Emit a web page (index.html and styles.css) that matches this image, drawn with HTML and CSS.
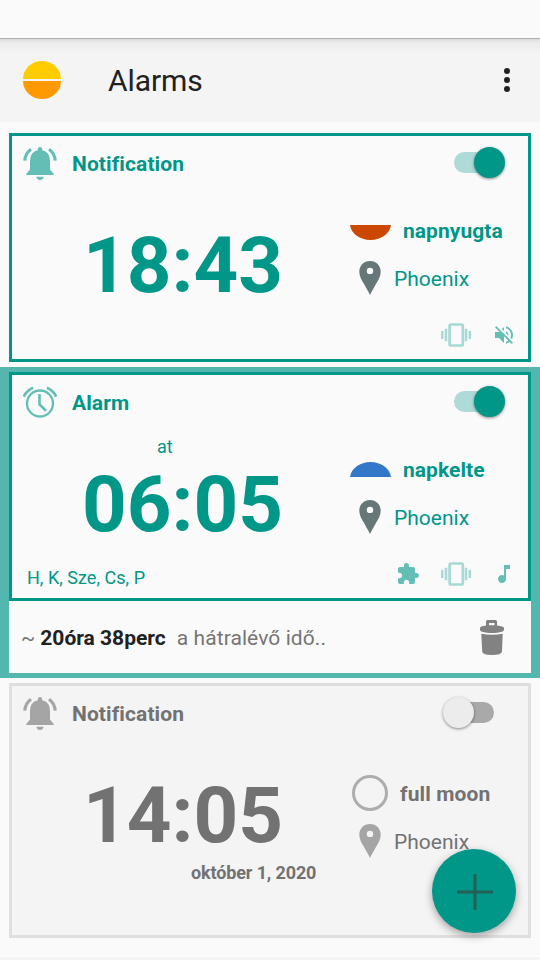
FILE: index.html
```html
<!DOCTYPE html>
<html lang="hu">
<head>
<meta charset="utf-8">
<title>Alarms</title>
<link rel="stylesheet" href="styles.css">
</head>
<body>
<svg class="defs" width="0" height="0" aria-hidden="true">
  <symbol id="bell" viewBox="0 0 34 34">
    <path fill="currentColor" d="M14.8 2.3Q14.8 0 17 0t2.200 2.300V3.200Q27 5 27 14v8.500l3.600 4.200v1.300H3.400v-1.300L7 22.500V14Q7 5 14.800 3.200zM13.300 29.700h7.400q-1 3.300-3.700 3.300t-3.700-3.300z"/>
    <path fill="none" stroke="currentColor" stroke-width="3.200" d="M8 2.200Q2.200 6.200 1.800 13.700M26 2.200Q31.800 6.200 32.200 13.700"/>
  </symbol>
  <symbol id="clock" viewBox="0 0 34 34">
    <g fill="none" stroke="currentColor"><circle cx="17" cy="17.500" r="13" stroke-width="2.300"/><path stroke-width="2.600" d="M16.500 8V18.500l6.500 6.300"/><path stroke-width="2.700" d="M.8 10.700Q3.500 4.800 10 1.800M33.200 10.700Q30.500 4.800 24 1.800"/></g>
  </symbol>
  <symbol id="pin" viewBox="0 0 22 34">
    <path fill="currentColor" fill-rule="evenodd" d="M11 0C4.700 0 .3 4.700.3 10.700c0 4.500 2.400 8.300 4.900 12.600C7.200 26.900 9 30 11 34c2-4 3.800-7.100 5.800-10.700 2.500-4.300 4.900-8.100 4.900-12.600C21.700 4.700 17.300 0 11 0zM11 6.700a3.200 3.200 0 1 1 0 6.400 3.200 3.200 0 0 1 0-6.400z"/>
  </symbol>
  <symbol id="vibrate" viewBox="0 0 30 24">
    <g fill="none" stroke="currentColor"><rect x="8.600" y="1.500" width="13.200" height="21" rx="1.500" stroke-width="2.700"/><path stroke-width="2.500" d="M1.200 8v8M28.800 8v8M5 5.800v12.400M25 5.800v12.400"/></g>
  </symbol>
  <symbol id="muted" viewBox="0 0 24 24">
    <path fill="currentColor" d="M16.500 12c0-1.770-1.020-3.290-2.500-4.030v2.210l2.450 2.450c.03-.2.050-.41.050-.63zm2.500 0c0 .94-.2 1.820-.54 2.640l1.510 1.510C20.630 14.910 21 13.500 21 12c0-4.280-2.990-7.860-7-8.770v2.060c2.890.86 5 3.540 5 6.710zM4.270 3L3 4.270 7.730 9H3v6h4l5 5v-6.730l4.250 4.250c-.67.520-1.420.93-2.250 1.180v2.060c1.380-.31 2.630-.95 3.690-1.810L19.730 21 21 19.730l-9-9L4.270 3zM12 4L9.910 6.090 12 8.180V4z"/>
  </symbol>
  <symbol id="puzzle" viewBox="0 0 24 24">
    <path fill="currentColor" d="M20.500 11H19V7c0-1.100-.9-2-2-2h-4V3.500C13 2.120 11.880 1 10.500 1S8 2.120 8 3.500V5H4c-1.100 0-1.990.9-1.990 2v3.800H3.500c1.490 0 2.700 1.210 2.700 2.700s-1.210 2.700-2.700 2.700H2V20c0 1.100.9 2 2 2h3.800v-1.500c0-1.490 1.210-2.700 2.700-2.700s2.700 1.210 2.700 2.700V22H17c1.100 0 2-.9 2-2v-4h1.500c1.380 0 2.500-1.120 2.500-2.500S21.880 11 20.500 11z"/>
  </symbol>
  <symbol id="note" viewBox="0 0 24 24">
    <path fill="currentColor" d="M12 3v10.550c-.59-.34-1.270-.55-2-.55-2.210 0-4 1.790-4 4s1.790 4 4 4 4-1.790 4-4V7h4V3h-6z"/>
  </symbol>
</svg>

<div class="status"></div>
<header class="bar">
  <svg class="logo" viewBox="0 0 38 38"><path fill="#fc0" d="M0 18a19 18 0 0 1 38 0z"/><path fill="#f90" d="M0 20a19 18 0 0 0 38 0z"/></svg>
  <h1>Alarms</h1>
  <svg class="more" viewBox="0 0 6 24"><circle cx="3" cy="3" r="3"/><circle cx="3" cy="12" r="3"/><circle cx="3" cy="21" r="3"/></svg>
</header>

<main>
  <div class="item">
    <section class="card">
      <div class="head">
        <svg class="kind"><use href="#bell"/></svg>
        <h2>Notification</h2>
        <span class="switch on"><i></i></span>
      </div>
      <div class="body">
        <div class="when"><div class="prefix"></div><div class="time from-one">18:43</div></div>
        <div class="info">
          <div class="event"><svg class="sun set" viewBox="0 0 41 15"><path fill="#cc4700" d="M0 0h41C40 8.500 31 15 20.500 15S1 8.500 0 0z"/></svg><b>napnyugta</b></div>
          <div class="place"><svg class="pin"><use href="#pin"/></svg><span>Phoenix</span></div>
          <div class="flags"><svg class="vib"><use href="#vibrate"/></svg><svg class="flag"><use href="#muted"/></svg></div>
        </div>
      </div>
    </section>
  </div>

  <div class="item selected">
    <section class="card">
      <div class="head">
        <svg class="kind"><use href="#clock"/></svg>
        <h2>Alarm</h2>
        <span class="switch on"><i></i></span>
      </div>
      <div class="body">
        <div class="when"><div class="prefix">at</div><div class="time">06:05</div><div class="days">H, K, Sze, Cs, P</div></div>
        <div class="info">
          <div class="event"><svg class="sun" viewBox="0 0 41 15"><path fill="#3377c9" d="M0 15h41C40 6.500 31 0 20.500 0S1 6.500 0 15z"/></svg><b>napkelte</b></div>
          <div class="place"><svg class="pin"><use href="#pin"/></svg><span>Phoenix</span></div>
          <div class="flags"><svg class="flag puzzle"><use href="#puzzle"/></svg><svg class="vib"><use href="#vibrate"/></svg><svg class="flag"><use href="#note"/></svg></div>
        </div>
      </div>
    </section>
    <div class="remaining">
      <span class="tilde">~</span><b>20óra 38perc</b><span class="rest">a hátralévő idő..</span>
      <svg class="trash" viewBox="0 0 24 35"><path fill="#828282" fill-rule="evenodd" d="M6 5.500V1.500Q6 0 7.500 0h8Q17 0 17 1.500v4c4 .4 7 1.400 7 2.500v2c0 1.600-5 3-12 3S0 11.600 0 10V8c0-1.100 2-2.100 6-2.500zM9 3v2.200h5.500V3zM1.300 13.700Q12 16 22.700 13.700L22 31.500Q21.500 35 12 35T2.200 31.500z"/></svg>
    </div>
  </div>

  <div class="item">
    <section class="card off">
      <div class="head">
        <svg class="kind"><use href="#bell"/></svg>
        <h2>Notification</h2>
        <span class="switch"><i></i></span>
      </div>
      <div class="body">
        <div class="when"><div class="prefix"></div><div class="time from-one">14:05</div><div class="date">október 1, 2020</div></div>
        <div class="info">
          <div class="event"><span class="moon"></span><b>full moon</b></div>
          <div class="place"><svg class="pin"><use href="#pin"/></svg><span>Phoenix</span></div>
        </div>
      </div>
    </section>
  </div>
</main>
<div class="bottom"></div>
<button class="fab" aria-label="Add"><svg viewBox="0 0 36 36"><path d="M18 0v36M0 18h36" stroke="#236055" stroke-width="3"/></svg></button>
</body>
</html>
```
FILE: styles.css
```css
* { box-sizing: border-box; }
body {
  margin: 0;
  width: 540px;
  height: 960px;
  overflow: hidden;
  position: relative;
  display: flex;
  flex-direction: column;
  background: #fafafa;
  font-family: Roboto, sans-serif;
  color: #009688;
}
svg { display: block; flex: none; }
.defs { position: absolute; }
h1, h2 { margin: 0; }
.status { height: 39px; border-bottom: 1px solid #b0b0b0; flex: none; }
.bar {
  height: 83px;
  flex: none;
  display: flex;
  align-items: center;
  padding: 0 30px 1px 23px;
  background: linear-gradient(#dedede 0, #e9e9e9 4px, #f0f0f0 9px, #f4f4f4 14px);
}
.logo { width: 38px; height: 38px; }
.bar h1 { margin-left: 47px; font-size: 30px; font-weight: 400; color: #212121; letter-spacing: -0.1px; }
.more { width: 6px; height: 24px; margin-left: auto; fill: #212121; }

main { padding-top: 6px; display: flex; flex-direction: column; }
.item { padding: 5px 9px; }
.selected { background: #54b7af; }
.card { height: 229px; border: 3px solid #009688; background: #fafafa; display: flex; flex-direction: column; }
.head { height: 54px; display: flex; align-items: center; padding: 0 23px 0 11px; }
.kind { width: 34px; height: 34px; color: #64beb5; margin-top: 1px; }
.head h2 { margin-left: 15px; padding-top: 2px; font-size: 21px; font-weight: 700; line-height: 24px; letter-spacing: 0.1px; }
.switch { margin: -2px 0 0 auto; width: 51px; height: 31px; display: flex; align-items: center; }
.switch::before { content: ""; width: 40px; height: 21px; border-radius: 11px; background: #aedbd7; }
.switch i { width: 31px; height: 31px; border-radius: 50%; margin-left: -20px; background: #009688; box-shadow: 0 1px 3px rgba(0,0,0,.45); position: relative; }
.body { flex: 1; display: flex; }
.when { width: 319px; display: flex; flex-direction: column; }
.prefix { height: 36px; line-height: 36px; font-size: 18px; padding-left: 145px; }
.time { height: 76px; line-height: 80px; font-size: 78px; font-weight: 700; padding-left: 70px; }
.from-one::first-letter { letter-spacing: -1px; }
.from-one { padding-left: 71px; }
.days { font-size: 18px; line-height: 24px; padding: 25px 0 0 15px; letter-spacing: 0.03px; }
.date { font-size: 18px; font-weight: 700; line-height: 24px; padding: 9px 0 0 179px; letter-spacing: -0.13px; }
.info { flex: 1; padding-top: 16px; }
.event, .place { height: 48px; display: flex; align-items: center; font-size: 21px; }
.event { padding-left: 18.500px; }
.sun { width: 41px; height: 15px; margin-top: 1px; }
.sun.set { margin-top: 5px; }
.event b { margin-left: 12.500px; padding-top: 2px; letter-spacing: 0.05px; }
.place { padding-left: 28px; }
.pin { width: 22px; height: 34px; color: #667777; }
.place span { margin-left: 13px; padding-top: 2px; font-weight: 400; }
.flags { margin-top: 21px; height: 24px; display: flex; justify-content: flex-end; align-items: center; padding-right: 12px; color: #64beb5; }
.flag { width: 24px; height: 24px; }
.puzzle { margin-right: 21px; }
.vib { width: 30px; height: 24px; margin-right: 21px; color: #a8dad5; }
.remaining { height: 72px; background: #fafafa; display: flex; align-items: center; padding: 0 27px 0 12px; font-size: 21px; color: #757575; }
.remaining span, .remaining b { padding-top: 2px; }
.remaining b { margin-left: 5px; color: #212121; }
.rest { margin-left: 11px; letter-spacing: 0.08px; }
.trash { width: 24px; height: 35px; margin-left: auto; }

.off { height: 255px; border-color: #dfdfdf; background: #f4f4f4; color: #727272; }
.off .kind, .off .pin { color: #a5a5a5; }
.off .info { padding-top: 29px; }
.off .switch { margin-right: 11px; flex-direction: row-reverse; }
.off .switch::before { background: #a9a9a9; }
.off .switch i { margin: 0 -20px 0 0; background: #ececec; }
.off .event { padding-left: 21px; }
.moon { width: 36px; height: 36px; border: 3px solid #adadad; border-radius: 50%; }
.off .event b { margin-left: 12px; letter-spacing: 0.12px; }
.bottom { margin-top: auto; height: 3px; background: #f4f4f4; }
.fab {
  position: absolute;
  left: 432px;
  top: 849px;
  width: 84px;
  height: 84px;
  border: 0;
  padding: 0;
  border-radius: 50%;
  background: #009688;
  box-shadow: 0 3px 8px rgba(0,0,0,.35);
  display: flex;
  align-items: center;
  justify-content: center;
}
.fab svg { width: 36px; height: 36px; margin: 2px 0 0 2px; }
```
